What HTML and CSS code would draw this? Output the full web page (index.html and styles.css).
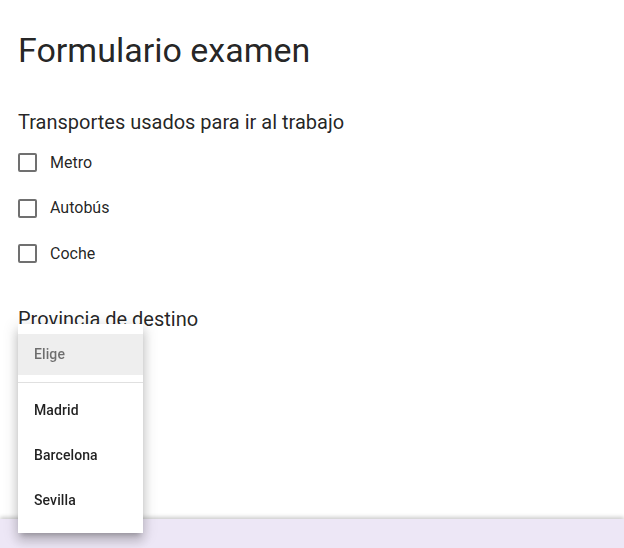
FILE: index.html
```html
<!DOCTYPE html>
<html lang="es">
<head>
<meta charset="utf-8">
<title>Formulario examen</title>
<link rel="stylesheet" href="styles.css">
</head>
<body>
<main class="form">
  <h1 class="title">Formulario examen</h1>
  <h2 class="section">Transportes usados para ir al trabajo</h2>
  <div class="checks">
    <label class="check"><span class="box"></span><span class="lbl">Metro</span></label>
    <label class="check"><span class="box"></span><span class="lbl">Autobús</span></label>
    <label class="check"><span class="box"></span><span class="lbl">Coche</span></label>
  </div>
  <div class="select-field">
    <h2 class="section section-prov">Provincia de destino</h2>
    <ul class="menu">
      <li class="item item-placeholder">Elige</li>
      <li class="divider"></li>
      <li class="item">Madrid</li>
      <li class="item">Barcelona</li>
      <li class="item">Sevilla</li>
    </ul>
  </div>
</main>
<footer class="bottom-bar"></footer>
</body>
</html>
```

FILE: styles.css
```css
html, body {
  margin: 0;
  padding: 0;
  background: #ffffff;
}
body {
  font-family: Roboto, "Noto Sans", sans-serif;
  color: rgba(0, 0, 0, 0.87);
  height: 548px;
  overflow: hidden;
}
.form {
  padding: 30px 18px 0;
}
.title {
  margin: 0;
  font-size: 34px;
  line-height: 40px;
  font-weight: 400;
}
.section {
  margin: 38px 0 0;
  font-size: 20px;
  line-height: 28px;
  font-weight: 400;
}
.checks {
  margin-top: 4px;
  display: flex;
  flex-direction: column;
}
.check {
  height: 45.5px;
  display: flex;
  align-items: center;
  gap: 13px;
}
.box {
  width: 15px;
  height: 15px;
  border: 2px solid rgba(0, 0, 0, 0.56);
  border-radius: 2px;
  flex: none;
}
.lbl {
  font-size: 16px;
  line-height: 24px;
}
.select-field {
  position: relative;
}
.section-prov {
  margin-top: 28.5px;
}
.menu {
  position: absolute;
  left: 0;
  top: 18.5px;
  width: 125px;
  margin: 0;
  padding: 10px 0;
  list-style: none;
  background: #ffffff;
  box-shadow: 0 5px 5px -3px rgba(0,0,0,0.2), 0 8px 10px 1px rgba(0,0,0,0.14), 0 3px 14px 2px rgba(0,0,0,0.12);
  z-index: 10;
}
.item {
  height: 45px;
  display: flex;
  align-items: center;
  padding: 0 16px;
  font-size: 14px;
  font-weight: 500;
  letter-spacing: 0.1px;
  color: rgba(0, 0, 0, 0.87);
}
.item-placeholder {
  height: 41px;
  background: #eeeeee;
  color: rgba(0, 0, 0, 0.54);
}
.divider {
  height: 1px;
  background: #e0e0e0;
  margin: 7px 0 5px;
}
.bottom-bar {
  position: fixed;
  left: 0;
  right: 0;
  bottom: 0;
  height: 29px;
  background: #ede7f6;
  box-shadow: 0 -2px 4px rgba(0, 0, 0, 0.2);
}
```
